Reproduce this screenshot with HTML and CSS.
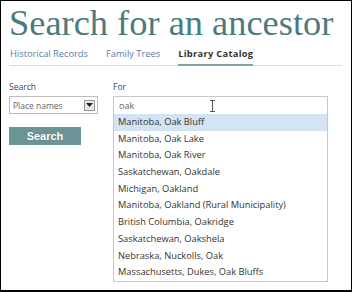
FILE: index.html
```html
<!DOCTYPE html>
<html lang="en">
<head>
    <meta charset="UTF-8">
    <title>Search for an ancestor</title>
    <link rel="stylesheet" href="styles.css">
</head>
<body>
    <div class="frame">
        <h1 class="page-title">Search for an ancestor</h1>

        <div class="tabs">
            <a class="tab">Historical Records</a>
            <a class="tab">Family Trees</a>
            <a class="tab active">Library Catalog</a>
        </div>

        <form class="search-form">
            <div class="col-left">
                <label class="field-label">Search</label>
                <div class="select-box">
                    <span>Place names</span>
                    <span class="select-arrow">
                        <svg width="7" height="4" viewBox="0 0 7 4"><path d="M0 0h7L3.5 4z" fill="#222"/></svg>
                    </span>
                </div>
                <button type="button" class="search-btn">Search</button>
            </div>

            <div class="col-right">
                <label class="field-label">For</label>
                <div class="text-input">
                    oak
                    <svg class="ibeam" width="7" height="12" viewBox="0 0 7 12"><path d="M1 0.5h5M1 11.5h5M3.5 0.5v11" stroke="#555" stroke-width="1" fill="none"/></svg>
                </div>
                <ul class="suggestions">
                    <li class="selected">Manitoba, Oak Bluff</li>
                    <li>Manitoba, Oak Lake</li>
                    <li>Manitoba, Oak River</li>
                    <li>Saskatchewan, Oakdale</li>
                    <li>Michigan, Oakland</li>
                    <li>Manitoba, Oakland (Rural Municipality)</li>
                    <li>British Columbia, Oakridge</li>
                    <li>Saskatchewan, Oakshela</li>
                    <li>Nebraska, Nuckolls, Oak</li>
                    <li>Massachusetts, Dukes, Oak Bluffs</li>
                </ul>
            </div>
        </form>
    </div>
</body>
</html>
```

FILE: styles.css
```css
body {
    margin: 0;
    background-color: #fff;
    font-family: "Open Sans", sans-serif;
    color: #333;
}

.frame {
    width: 352px;
    height: 292px;
    box-sizing: border-box;
    border: 1px solid #000;
    border-bottom-width: 2px;
    padding: 0 9px 0 8px;
    overflow: hidden;
}

.page-title {
    margin: 2px 0 0 0;
    font-family: "Liberation Serif", serif;
    font-weight: normal;
    font-size: 36.4px;
    line-height: 40px;
    white-space: nowrap;
    color: #4a7c7d;
}

.tabs {
    display: flex;
    gap: 18px;
    padding-left: 1px;
    border-bottom: 1px solid #dcdcdc;
    margin-top: 3px;
}

.tab {
    font-size: 9.3px;
    line-height: 16px;
    padding-bottom: 3px;
    color: #5a7ea6;
}

.tab.active {
    color: #333;
    font-weight: bold;
    letter-spacing: 0.3px;
    border-bottom: 2px solid #7fa4a6;
    margin-bottom: -1px;
    padding-bottom: 2px;
}

.search-form {
    display: flex;
    gap: 15px;
    margin-top: 15px;
}

.col-left {
    width: 89px;
}

.col-right {
    width: 215px;
}

.field-label {
    display: block;
    font-size: 8.5px;
    line-height: 12px;
    margin-bottom: 3px;
    color: #444;
}

.select-box {
    display: flex;
    align-items: center;
    justify-content: space-between;
    height: 18px;
    box-sizing: border-box;
    border: 1px solid #bdbdbd;
    padding: 0 2px 0 3px;
    font-size: 8.5px;
    color: #666;
}

.select-arrow {
    display: flex;
    align-items: center;
    justify-content: center;
    width: 11px;
    height: 11px;
    box-sizing: border-box;
    border: 1px solid #999;
    background: #e8e8e8;
}

.search-btn {
    display: block;
    margin-top: 13px;
    width: 72px;
    height: 18px;
    border: none;
    background-color: #6b9497;
    color: #fff;
    font-family: "Liberation Sans", sans-serif;
    font-weight: bold;
    font-size: 11px;
    text-shadow: 0 0 1px rgba(0, 0, 0, 0.3);
}

.text-input {
    position: relative;
    height: 18px;
    box-sizing: border-box;
    border: 1px solid #c8c8c8;
    border-bottom: none;
    padding-left: 5px;
    font-size: 9px;
    line-height: 17px;
    color: #666;
}

.ibeam {
    position: absolute;
    left: 95px;
    top: 3px;
}

.suggestions {
    list-style: none;
    margin: 0;
    padding: 0;
    border: 1px solid #c8c8c8;
    border-top: none;
}

.suggestions li {
    height: 16.7px;
    line-height: 16.7px;
    padding-left: 4px;
    font-size: 9.3px;
    color: #333;
}

.suggestions li.selected {
    background-color: #d4e4f3;
}
```
